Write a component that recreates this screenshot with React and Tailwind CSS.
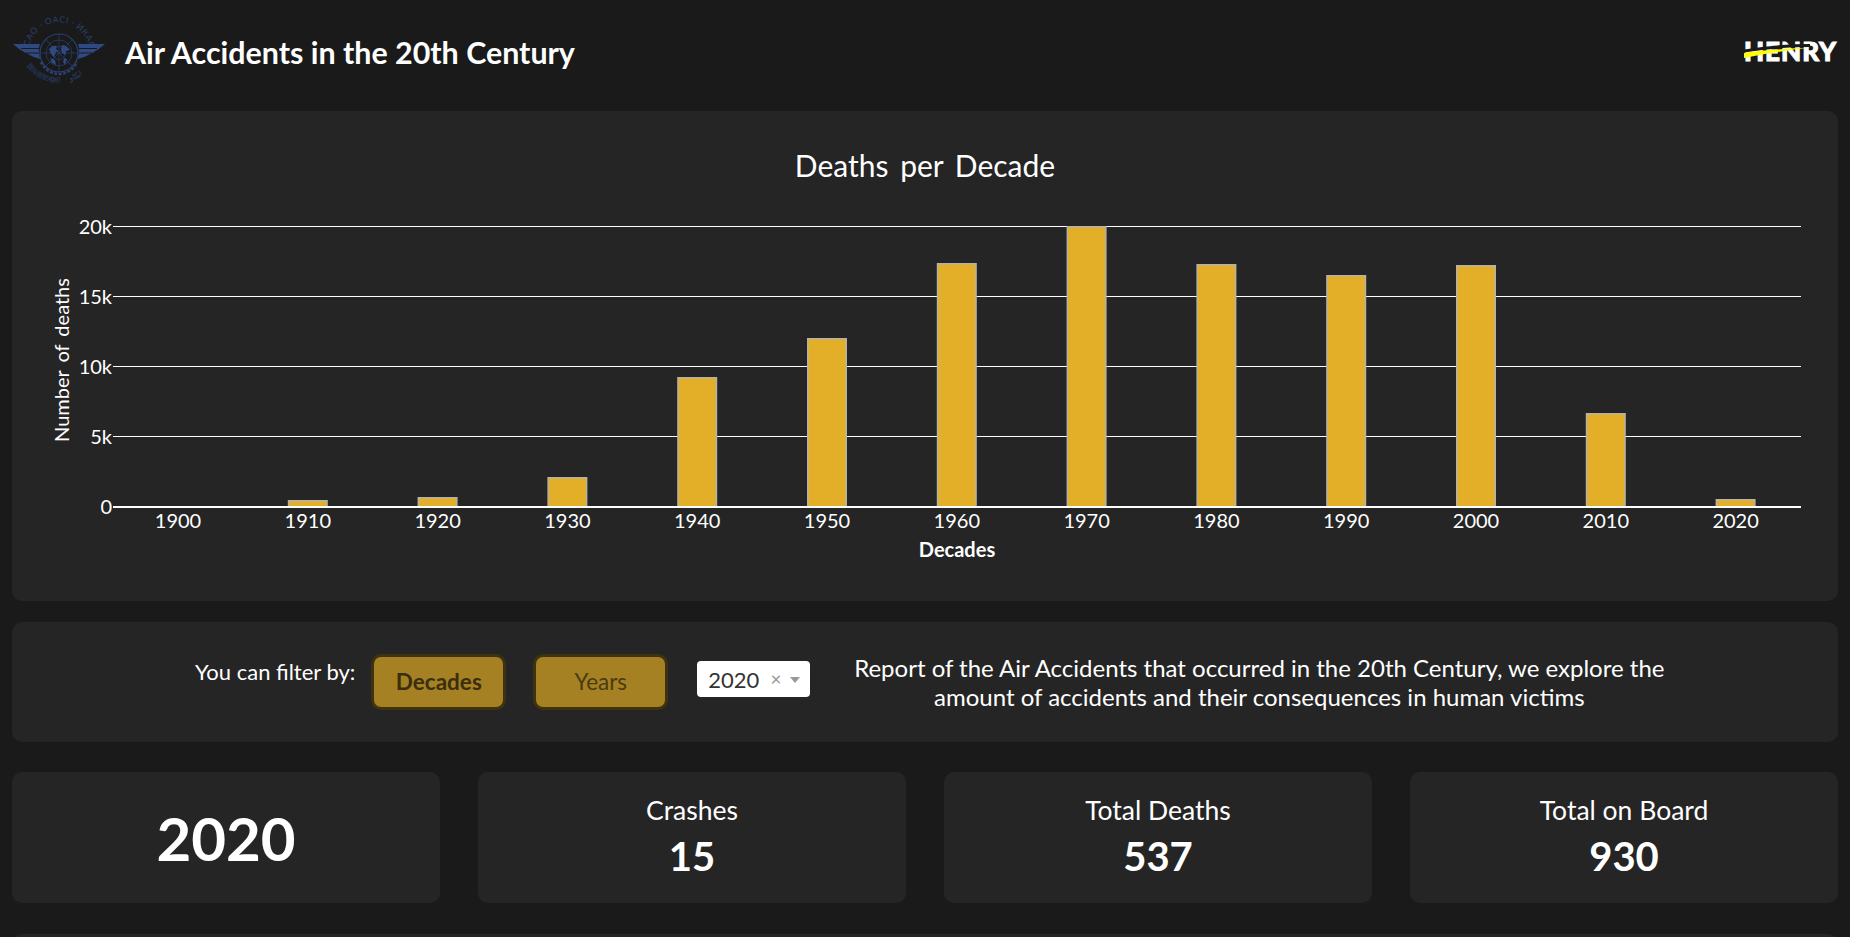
const bars = [
  ["1900", 507], ["1910", 500], ["1920", 497], ["1930", 477], ["1940", 377], ["1950", 338], ["1960", 263],
  ["1970", 226], ["1980", 264], ["1990", 275], ["2000", 265], ["2010", 413], ["2020", 499],
];
const ticks = [["20k", 226], ["15k", 296], ["10k", 366], ["5k", 436]];
const OFF = 111;

function IcaoLogo() {
  const c = "#2a4070";
  const w = "#2f4a82";
  return (
    <svg width="96" height="84" viewBox="0 0 96 84" className="shrink-0 mb-[3px]" fill="none" stroke={c}>
      <defs>
        <path id="arcTop" d="M17 47 A 30.6 30.6 0 1 1 77 47" />
        <path id="arcBottom" d="M8 36 A 39.3 39.3 0 0 0 86 36" />
      </defs>
      <text fontSize="8.5" letterSpacing="0.6" fill={c} stroke="none" textAnchor="middle" fontFamily="Lato, sans-serif">
        <textPath href="#arcTop" startOffset="50%">ICAO · OACI · ИКАО</textPath>
      </text>
      <text fontSize="6.5" fill={c} stroke="none" fontFamily="'Noto Sans CJK SC', sans-serif">
        <textPath href="#arcBottom" startOffset="17%">国际民航组织</textPath>
      </text>
      <text fontSize="8" fill={c} stroke="none" fontFamily="'Noto Sans', sans-serif">
        <textPath href="#arcBottom" startOffset="56%">· ايكاو</textPath>
      </text>
      <circle cx="47" cy="41" r="19" strokeWidth="1.2" />
      <circle cx="47" cy="41" r="13" strokeWidth="0.7" />
      <circle cx="47" cy="41" r="6.5" strokeWidth="0.7" />
      <path d="M47 22V60M28 41H66M34 28L60 54M60 28L34 54" strokeWidth="0.7" />
      <path d="M37 37c2-3 5-4 8-3l-1 3 3 2-3 1-2 5-3-3zM50 33c3 0 6 2 8 5l-4 1-1 4-3-2-1-4zM52 46l3 1-2 6-2-3zM38 46l5 2 1 5-4-2z" fill={w} stroke="none" />
      <path d="M1 32H28C26 36 27 41 28 47C18 44 9 39 1 32Z" fill={w} stroke="none" />
      <path d="M93 32H66C68 36 67 41 66 47C76 44 85 39 93 32Z" fill={w} stroke="none" />
      <path d="M9 36.5H27M14 41H27M85 36.5H67M80 41H67" stroke="#1a1a1a" strokeWidth="1" />
      <path d="M29 50C32 57 39 62 47 62C55 62 62 57 65 50" strokeWidth="2.5" strokeDasharray="3 1.5" />
    </svg>
  );
}

function HenryLogo() {
  return (
    <div className="relative w-[94px] h-[19px]">
      <span className="block text-[26px] leading-[19px] font-black tracking-[1px] text-white font-['Lato'] [-webkit-text-stroke:1px_white]">HENRY</span>
      <svg className="absolute left-0 top-0" width="94" height="19" viewBox="0 0 94 19">
        <path d="M0 9C22 5.5 45 3.5 66 3.5" stroke="#1a1a1a" strokeWidth="3" fill="none" />
        <path d="M0 11C20 8 45 6.5 66 5.5C45 8 22 11.5 0 16Z" fill="#ffff00" />
      </svg>
    </div>
  );
}

function Chart() {
  return (
    <svg width="1826" height="490" viewBox="0 0 1826 490" className="block" fontFamily="Lato, sans-serif" fill="#fff">
      <text x="913" y="66" textAnchor="middle" fontSize="30" wordSpacing="4">Deaths per Decade</text>
      <text transform="translate(57 249) rotate(-90)" textAnchor="middle" fontSize="20" wordSpacing="3">Number of deaths</text>
      <text x="945" y="446" textAnchor="middle" fontSize="20" fontWeight="700">Decades</text>
      {ticks.map(([t, y]) => (
        <g key={t}>
          <line x1="101" x2="1789" y1={y - OFF + 0.5} y2={y - OFF + 0.5} stroke="#fff" strokeWidth="1" />
          <text x="100" y={y - OFF + 7.5} textAnchor="end" fontSize="20">{t}</text>
        </g>
      ))}
      {bars.map(([label, top], i) => {
        const cx = 166 + i * 129.8;
        return (
          <g key={label}>
            {top < 507 && (
              <rect x={cx - 19.25} y={top - OFF + 0.75} width="38.5" height={507 - top - 0.75} fill="#e3af29" stroke="#b5b3a8" strokeWidth="1.5" />
            )}
            <text x={cx} y="417" textAnchor="middle" fontSize="20">{label}</text>
          </g>
        );
      })}
      <line x1="101" x2="1789" y1="396" y2="396" stroke="#fff" strokeWidth="2" />
      <text x="100" y="403" textAnchor="end" fontSize="20">0</text>
    </svg>
  );
}

function Stat({ title, value }) {
  return (
    <div className="h-[131px] rounded-[10px] bg-[#252525] flex flex-col items-center justify-center pb-[2px] text-white">
      <div className="text-[26.5px] leading-[32px]">{title}</div>
      <div className="text-[40px] leading-[48px] font-bold mt-[6px]">{value}</div>
    </div>
  );
}

export default function App() {
  return (
    <div className="h-[937px] bg-[#1a1a1a] overflow-hidden font-['Lato',sans-serif] text-white">
      <header className="h-[111px] flex items-center pl-3 pr-3">
        <IcaoLogo />
        <h1 className="ml-[17px] text-[30.4px] font-bold leading-[36px] mb-[8px]">Air Accidents in the 20th Century</h1>
        <div className="ml-auto mb-[8px]"><HenryLogo /></div>
      </header>
      <section className="mx-3 h-[490px] rounded-[10px] bg-[#252525]"><Chart /></section>
      <section className="mx-3 mt-[21px] h-[120px] rounded-[10px] bg-[#252525] flex items-center pl-[183px]">
        <span className="text-[22px] mb-[22px] whitespace-nowrap">You can filter by:</span>
        <button className="ml-[16px] w-[135px] h-[56px] rounded-[10px] border-[3px] border-[#3f3211] bg-[#a58123] text-[22.5px] font-bold text-[#3a2e0e]">Decades</button>
        <button className="ml-[27px] w-[135px] h-[56px] rounded-[10px] border-[3px] border-[#3f3211] bg-[#a58123] text-[22.5px] text-[#4a3b12]">Years</button>
        <div className="ml-[29px] mb-[6px] w-[113px] h-[36px] rounded-[4px] bg-white flex items-center pl-[11px] text-[#333] text-[22px]">
          <span>2020</span>
          <span className="ml-[11px] text-[#999] text-[19px]">×</span>
          <span className="ml-[9px] mt-[2px] w-0 h-0 border-x-[5px] border-t-[6px] border-x-transparent border-t-[#999]" />
        </div>
        <p className="ml-[24px] w-[850px] text-center text-[24px] leading-[29.5px]">
          Report of the Air Accidents that occurred in the 20th Century, we explore the<br />
          amount of accidents and their consequences in human victims
        </p>
      </section>
      <section className="mx-3 mt-[30px] grid grid-cols-4 gap-[38px]">
        <div className="h-[131px] rounded-[10px] bg-[#252525] flex items-center justify-center text-[60px] font-bold">2020</div>
        <Stat title="Crashes" value="15" />
        <Stat title="Total Deaths" value="537" />
        <Stat title="Total on Board" value="930" />
      </section>
      <section className="mx-3 mt-[31px] h-[200px] rounded-[10px] bg-[#252525]" />
    </div>
  );
}
